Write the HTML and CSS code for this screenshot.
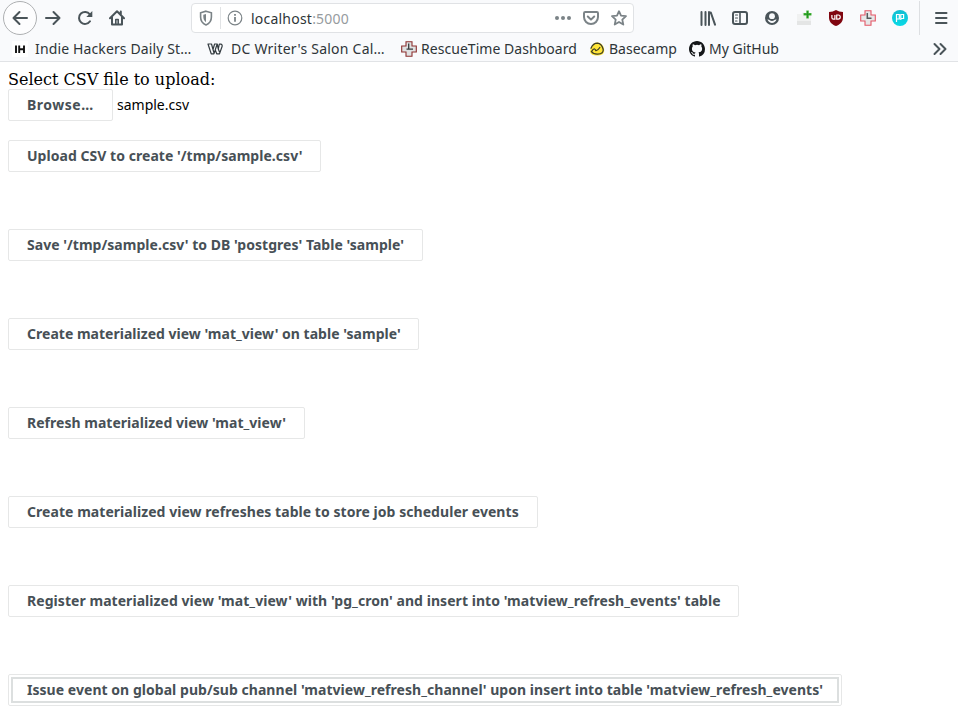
FILE: index.html
```
<!DOCTYPE html>
<html lang="en">
<head>
<meta charset="utf-8">
<title>localhost:5000</title>
<link rel="stylesheet" href="styles.css">
</head>
<body>
<header class="chrome">
  <div class="toolbar">
    <div class="tool back"><svg class="icon line" viewBox="0 0 16 16"><path d="M15 8H1.500M7.500 2L1.500 8L7.500 14"/></svg></div>
    <div class="tool"><svg class="icon line" viewBox="0 0 16 16"><path d="M1 8H14.500M8.500 2L14.500 8L8.500 14"/></svg></div>
    <div class="tool"><svg class="icon line" viewBox="0 0 16 16"><path d="M13 11.300A6 6 0 1 1 12.800 4.300"/><path class="solid" d="M15.300 1V7H9.300z"/></svg></div>
    <div class="tool"><svg class="icon line" viewBox="0 0 16 16"><path d="M1 8.200L8 1.300L15 8.200M3 7V14.500H13V7M11.800 1.500V4.500"/><path d="M6.800 14V9.500H9.200V14" stroke-width="1.600"/></svg></div>
    <div class="urlbar">
      <svg class="icon shield" viewBox="0 0 16 16"><path d="M8 1.200L13.400 2.800V7C13.400 10.600 11.500 13.500 8 14.900C4.500 13.500 2.600 10.600 2.600 7V2.800z"/><path class="solid" d="M8 4V12.200C6 10.900 5.300 9 5.300 6.800V4.700z"/></svg>
      <span class="divider"></span>
      <svg class="icon info" viewBox="0 0 16 16"><circle cx="8" cy="8" r="6.800"/><path d="M8 7V11.800M8 4.100V5.700" stroke-width="1.800"/></svg>
      <span class="address">localhost<span class="port">:5000</span></span>
      <div class="page-actions">
        <svg class="icon" viewBox="0 0 16 16"><circle class="solid" cx="2" cy="8" r="2"/><circle class="solid" cx="8" cy="8" r="2"/><circle class="solid" cx="14" cy="8" r="2"/></svg>
        <svg class="icon line" viewBox="0 0 16 16"><path d="M2.200 2H13.800Q15 2 15 3.200V7A7 7 0 0 1 1 7V3.200Q1 2 2.200 2zM4.800 6.500L8 9.600L11.200 6.500"/></svg>
        <svg class="icon line" viewBox="0 0 16 16"><path stroke-width="1.800" d="M8 1.200L10 5.700L15 6.200L11.300 9.600L12.300 14.600L8 12L3.700 14.600L4.700 9.600L1 6.200L6 5.700z"/></svg>
      </div>
    </div>
    <div class="extensions">
      <div class="tool"><svg class="icon line" viewBox="0 0 16 16"><path d="M1.500 2V15M5.500 2V15M9 2V15M10.800 2.500L15 14.700"/></svg></div>
      <div class="tool"><svg class="icon line" viewBox="0 0 16 16"><rect x="1" y="2" width="14" height="12" rx="2"/><path d="M8 2V14" stroke-width="1.600"/><path d="M3.500 5H5.500M3.500 8H5.500M3.500 11H5" stroke-width="1.100"/></svg></div>
      <div class="tool"><svg class="icon" viewBox="0 0 16 16"><circle cx="8" cy="8" r="7" fill="#4a5459"/><circle cx="8" cy="6.200" r="2.900" fill="#f8f9fb"/><path d="M3.400 9.600Q4.800 9.300 5.500 10Q8 12 10.500 10Q11.200 9.300 12.600 9.600Q11 13 8 13T3.400 9.600z" fill="#f8f9fb"/></svg></div>
      <div class="tool"><svg class="icon" viewBox="0 0 16 16"><path d="M1 4H6V2.500H9V4H15V15H1z" fill="#f0f1f1"/><path d="M1 11H15V15H1z" fill="#e4e5e5"/><path d="M10.300 .5H12.800V3H15.500V5.500H12.800V8.500H10.300V5.500H7.500V3H10.300z" fill="#4db83f"/><path d="M11.500 1V8M8 4.200H15" stroke="#219421" stroke-width="1.100"/></svg></div>
      <div class="tool"><svg class="icon" viewBox="0 0 16 16"><path d="M8 0Q11 2 15 2V7.500C15 12 12 14.500 8 16C4 14.500 1 12 1 7.500V2Q5 2 8 0z" fill="#800610"/><path d="M3.900 5V7.700Q3.900 9.100 5.300 9.100H6.900V5M8.700 5V9.100H10.200A2.050 2.050 0 0 0 10.200 5z" fill="none" stroke="#fff" stroke-width="1.200"/></svg></div>
      <div class="tool"><svg class="icon" viewBox="0 0 16 16"><path d="M5 .7H11V5H15.300V11H11V15.300H5V11H.7V5H5z" fill="#e6e7e8" stroke="#e45766" stroke-width="1.100"/><path d="M7.300 3V8.300H11.500" fill="none" stroke="#55595b" stroke-width="1.500"/></svg></div>
      <div class="tool"><svg class="icon" viewBox="0 0 16 16"><defs><linearGradient id="aqua" x1="0" y1="0" x2="0" y2="1"><stop stop-color="#13bdd1"/><stop offset="1" stop-color="#08d9e6"/></linearGradient></defs><circle cx="8" cy="8" r="8" fill="url(#aqua)"/><path d="M4.500 12V4.500H7.300V9H4.500M8.800 10V4.500H11.600V8.500H8.800" fill="none" stroke="#fff" stroke-width="1.200"/></svg></div>
    </div>
    <span class="menu-divider"></span>
    <div class="tool menu"><svg class="icon line" viewBox="0 0 16 16"><path d="M3 3H13.500M3 8H13.500M3 13H13.500"/></svg></div>
  </div>
  <nav class="bookmarks">
    <a class="bookmark indie"><svg class="icon" viewBox="0 0 16 16"><path d="M0 0H16V16H0z" fill="#fff"/><path d="M4 4.500V12M7.200 4.500V12M12 4.500V12M7.200 8.200H12" fill="none" stroke="#111" stroke-width="1.900"/></svg><span>Indie Hackers Daily St…</span></a>
    <a class="bookmark writers"><svg class="icon" viewBox="0 0 16 16"><path d="M1 3H4.500L6 8.500L7.600 3H10.200L11.300 8L12.300 3.200H14.300Q15.600 4 15 5.800L12.500 12.800H9.700L8.300 9L6.900 12.800H4.200zM4.500 3L7 12M10.200 3L8.200 9M11.300 8L12.500 11" fill="none" stroke="#343c41" stroke-width="1.200" stroke-linejoin="round"/></svg><span>DC Writer's Salon Cal…</span></a>
    <a class="bookmark rescue"><svg class="icon" viewBox="0 0 16 16"><path d="M5 .7H11V5H15.300V11H11V15.300H5V11H.7V5H5z" fill="#dfe1e2" stroke="#8d302f" stroke-width="1.100"/><path d="M7.700 2.500V8.200H12M5.500 8.200H7.700" fill="none" stroke="#383b3d" stroke-width="1.300"/></svg><span>RescueTime Dashboard</span></a>
    <a class="bookmark basecamp"><svg class="icon" viewBox="0 0 16 16"><path d="M1 10.500C2 4.500 4.500 1.500 8.300 1.500C12.500 1.500 15.200 5.500 15.200 9.500C15.200 13.700 11.500 14.500 8 14.500C4.300 14.500 1.500 13.500 1 10.500z" fill="#ffe536"/><path d="M2 7.200Q4.200 2.200 8.400 2.200Q12.500 2.500 14.200 8.200Q15 12.800 8.500 13.200Q4.300 13.300 2.500 10.700Q4.400 7.500 5.600 8Q6.300 8.300 6.900 9.700Q8.500 10 10.800 6.500" fill="none" stroke="#3c3c26" stroke-width="1.300" stroke-linecap="round"/></svg><span>Basecamp</span></a>
    <a class="bookmark github"><svg class="icon" viewBox="0 0 16 16"><path fill="#151719" d="M8 0C3.580 0 0 3.580 0 8c0 3.540 2.290 6.530 5.470 7.590.4.070.55-.17.55-.38 0-.19-.01-.82-.01-1.490-2.010.37-2.530-.49-2.690-.94-.09-.23-.48-.94-.82-1.130-.28-.15-.68-.52-.01-.53.63-.01 1.080.58 1.230.82.72 1.210 1.870.87 2.330.66.070-.52.28-.87.51-1.070-1.780-.2-3.640-.89-3.640-3.950 0-.87.31-1.590.82-2.150-.08-.2-.36-1.020.08-2.120 0 0 .67-.21 2.200.82a7.600 7.600 0 0 1 4 0c1.530-1.040 2.200-.82 2.200-.82.44 1.100.16 1.920.08 2.120.51.56.82 1.270.82 2.150 0 3.070-1.870 3.750-3.650 3.950.29.25.54.73.54 1.480 0 1.070-.01 1.930-.01 2.200 0 .21.15.46.55.38A8 8 0 0 0 16 8c0-4.420-3.580-8-8-8z"/></svg><span>My GitHub</span></a>
    <svg class="icon line overflow" viewBox="0 0 16 16"><path d="M2.500 3L7.500 8L2.500 13M8.500 3L13.500 8L8.500 13"/></svg>
  </nav>
</header>
<main class="page">
  <div class="prompt">Select CSV file to upload:</div>
  <div class="file-row"><button class="action browse">Browse…</button><span class="filename">sample.csv</span></div>
  <div class="actions">
    <button class="action upload">Upload CSV to create '/tmp/sample.csv'</button>
    <button class="action save">Save '/tmp/sample.csv' to DB 'postgres' Table 'sample'</button>
    <button class="action create-view">Create materialized view 'mat_view' on table 'sample'</button>
    <button class="action refresh">Refresh materialized view 'mat_view'</button>
    <button class="action create-events">Create materialized view refreshes table to store job scheduler events</button>
    <button class="action register">Register materialized view 'mat_view' with 'pg_cron' and insert into 'matview_refresh_events' table</button>
    <button class="action issue">Issue event on global pub/sub channel 'matview_refresh_channel' upon insert into table 'matview_refresh_events'</button>
  </div>
</main>
</body>
</html>
```
FILE: styles.css
```
* { box-sizing: border-box; }
body { margin: 0; background: #fff; overflow: hidden; }
.icon { display: block; width: 16px; height: 16px; flex: none; }
.line { fill: none; stroke: #4a5459; stroke-width: 2; stroke-linecap: round; stroke-linejoin: round; }
.solid { fill: currentColor; stroke: none; }

.chrome { height: 62px; background: #f9fafc; border-bottom: 1px solid #e1e3e6; color: #4a5459; font: 14px "Noto Sans", sans-serif; }
.toolbar { display: flex; align-items: center; height: 36px; padding-left: 3px; }
.tool { display: flex; align-items: center; justify-content: center; width: 32px; height: 34px; flex: none; }
.back { width: 34px; border: 1px solid #aeb0b2; border-radius: 50%; background: #fdfdfe; }
.urlbar { display: flex; align-items: center; width: 443px; height: 30px; margin: 0 58px; padding: 0 6px; border: 1px solid #e0e2e5; border-radius: 4px; background: #fff; color: #7b8387; }
.divider { width: 1px; height: 22px; margin: 0 6px; background: #e1e3e5; }
.shield, .info { fill: none; stroke: #7b8387; stroke-width: 1.600; }
.info { stroke-width: 1.200; }
.address { margin-left: 8px; color: #2e3538; letter-spacing: 0.220px; }
.port { color: #969b9e; }
.page-actions { display: flex; gap: 12px; margin-left: auto; }
.page-actions .line { stroke: #7b8387; }
.extensions { display: flex; }
.menu-divider { width: 1px; height: 34px; margin: 0 5px 0 3px; background: #dddfe2; }

.bookmarks { display: flex; align-items: center; height: 25px; padding-left: 12px; color: #2e3538; }
.bookmark { display: flex; align-items: center; flex: none; white-space: nowrap; }
.bookmark span { margin-left: 7px; }
.indie { width: 195px; letter-spacing: 0.130px; }
.writers { width: 194px; letter-spacing: 0.240px; }
.rescue { width: 188px; letter-spacing: 0.040px; }
.rescue span, .github span, .basecamp span { margin-left: 4px; }
.basecamp { width: 100px; }
.writers span { margin-left: 8px; }
.overflow { margin-left: auto; margin-right: 10px; }

.page { padding: 8px 8px 0; }
.prompt { height: 19px; font: 16px/19px "DejaVu Serif", serif; color: #000; }
.file-row { display: flex; align-items: center; height: 32px; }
.filename { margin-left: 4px; padding-bottom: 2px; font: 14px "Noto Sans", sans-serif; color: #000; }
.actions { display: flex; flex-direction: column; align-items: flex-start; gap: 57px; margin-top: 19px; }
.action { height: 32px; margin: 0; padding: 0 0 1px 18px; border: 1px solid #e6e7e7; border-radius: 2px; background: #fff; color: #475056; font: bold 14px "Noto Sans", sans-serif; text-align: left; white-space: nowrap; }
.browse { width: 105px; letter-spacing: 0.500px; }
.upload { width: 313px; letter-spacing: 0.040px; }
.save { width: 415px; letter-spacing: 0.028px; }
.create-view { width: 411px; letter-spacing: 0.018px; }
.refresh { width: 297px; letter-spacing: 0.025px; }
.create-events { width: 530px; letter-spacing: 0.050px; }
.register { width: 731px; letter-spacing: 0.055px; }
.issue { width: 834px; letter-spacing: 0.039px; outline: 2px solid #dcdfdf; outline-offset: -5px; }
```
